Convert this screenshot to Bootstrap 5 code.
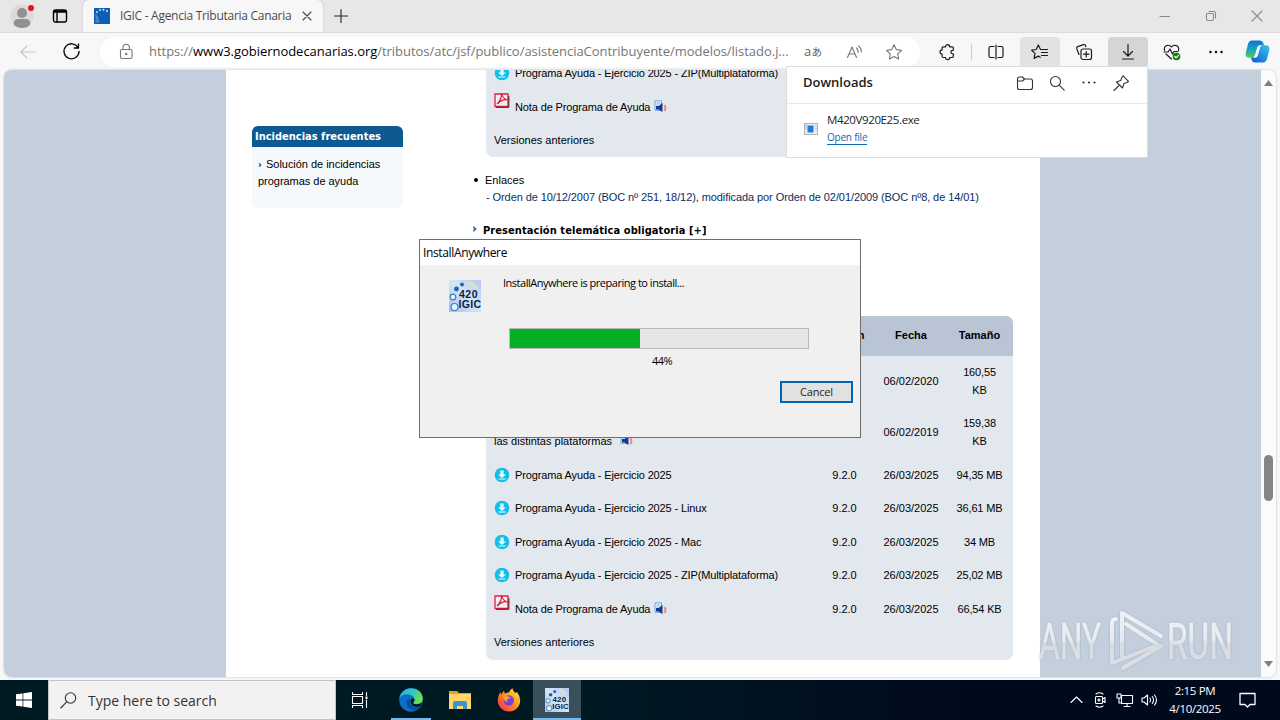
<!DOCTYPE html>
<html lang="es">
<head>
    <meta charset="UTF-8"/>
    <title>IGIC - Agencia Tributaria Canaria</title>
    <link href="https://cdn.jsdelivr.net/npm/bootstrap@5.3.3/dist/css/bootstrap.min.css" rel="stylesheet"/>
    <style>
        body{width:1280px;height:720px;background:#f7f7f7;color:#000;font-family:"Open Sans","Noto Sans",sans-serif;font-size:12px;line-height:1.5}
        svg{display:block;flex:none;overflow:visible}
        .ln{fill:none;stroke:currentColor;stroke-width:1.1;stroke-linecap:round;stroke-linejoin:round}

        /* ventana del navegador */
        .titlebar{height:32px;background:#e7e7e7}
        .tb-left{width:83px}
        .tb-cell{width:46px}
        .win-ctl{color:#8a8a8a}
        .tab-active{width:240px;height:32px;background:#f7f7f7;border-radius:6px 6px 0 0;box-shadow:0 0 2px #bbb;padding:0 11px;color:#4a4a4a}
        .tab-title{width:175px;font-size:12px;letter-spacing:-.28px;margin-left:10px}
        .new-tab{margin-left:11px;color:#222}
        .toolbar{height:38px;background:#f7f7f7;border-top:1px solid #dcdcdc}
        .ic-back{margin-left:20px;color:#c6c6c6}
        .ic-reload{margin:0 20px 0 27px;stroke-width:1.3}
        .address{width:820px;height:30px;border-radius:15px;background:#fff;color:#767676;padding-left:16px}
        .url-text{width:645px;font-size:13px;margin-left:13px;letter-spacing:-.035px}
        .url-text b{font-weight:400;color:#000}
        .tool{width:40px;height:30px;margin-right:4px;border-radius:4px;color:#1b1b1b}
        .tool .ln{stroke-width:1.2}
        .tool.first{margin:0 0 0 7px}
        .tool.on{background:#e2e2e2}
        .tool.down{background:#d5d5d5}
        .tool-sep{width:1px;height:16px;background:#ccc;margin:0 4px 0 4px}
        .copilot{margin-left:5px}

        /* página */
        .viewport{height:607px;margin:0 4px;border-radius:8px;box-shadow:0 0 2px #aaa;background:#fff}
        .side-left{width:222px;background:#c4cfdd}
        .side-right{width:221px;background:#c4cfdd}
        .page{width:814px;background:#fff;font-family:"Liberation Sans",Arial,sans-serif;font-size:11px;line-height:18px;padding-left:26px}
        .scroller{width:15px;background:#fbfbfb;padding:10px 0}
        .thumb{width:9px;height:46px;border-radius:5px;background:#858585;margin-top:369px}
        .aside-box{width:151px;margin-top:56px}
        .aside-head{height:21px;background:#0d5a93;color:#fff;font-family:"DejaVu Sans",Verdana,sans-serif;font-stretch:condensed;font-weight:700;font-size:11px;line-height:22px;padding-left:3px;border-radius:6px 6px 0 0}
        .aside-body{height:61px;background:#f6f9fc;border-radius:0 0 6px 6px;line-height:17px;padding:9px 6px;letter-spacing:-.03px}
        .main-col{width:541px;margin-left:69px}
        .panel{width:527px;margin-left:14px;background:#e3e8ef}
        .panel-top{height:87px;border-radius:0 0 7px 7px}
        .panel-table{height:344px;margin-top:76px;border-radius:7px}
        .line{height:33.5px;flex:none}
        .line.tall{height:51px;padding-bottom:2px}
        .line.head{height:40px;background:#b9c5d5;font-weight:700;font-size:11px;padding-bottom:2px}
        .c-name{width:326px;padding-left:8px;letter-spacing:-.13px}
        .c-name .plain{letter-spacing:0}
        .c-name .with-icon{padding-left:1px}
        .ic-pdf{margin-bottom:13px}
        .c-ver{width:65px}
        .c-date,.c-size{width:68px}
        .c-size{letter-spacing:-.15px;padding-left:1px}
        .head .c-size{letter-spacing:0}
        .links-head{margin-top:14px}
        .blue-link{color:#0b2e62;line-height:16px;padding-left:14px;letter-spacing:-.083px}
        .dot{width:4px;height:4px;border-radius:50%;background:#000;margin:0 7px 0 2px}
        .section-title{font-family:"DejaVu Sans",Verdana,sans-serif;font-stretch:condensed;font-weight:700;font-size:11px;letter-spacing:.07px;margin-top:17px}
        .section-title span{padding-left:2px}

        /* descargas */
        .downloads{position:absolute;left:786px;top:66px;width:362px;height:92px;background:#fff;border:1px solid #dcdcdc;z-index:5}
        .dl-head{height:37px;border-bottom:1px solid #e8e8e8;padding:0 18px 4px 16px;color:#333}
        .dl-icons{gap:16px}
        .dl-title{font-size:13px;font-weight:600;color:#1b1b1b}
        .dl-row{padding:8px 17px}
        .dl-info{margin-left:9px}
        .dl-name{font-size:11.5px;line-height:15px;letter-spacing:-.38px;color:#222}
        .dl-open{font-size:10px;line-height:14px;color:#1568b0;border-bottom:1px solid #1568b0;letter-spacing:-.22px;margin-top:3px;margin-bottom:1px}

        /* diálogo del instalador */
        .installer{position:absolute;left:419px;top:239px;width:442px;height:199px;background:#f0f0f0;border:1px solid #6e6e6e;z-index:6}
        .ins-title{height:25px;background:#fff;padding-left:3px;line-height:25px;font-size:12px;letter-spacing:-.36px}
        .ins-body{height:172px;padding:11px 7px 0 29px;font-size:11px;letter-spacing:-.48px}
        .ins-logo{margin-top:4px}
        .ins-col{width:306px;margin-left:22px}
        .ins-msg{line-height:14px}
        .progress.meter{width:300px;height:21px;margin:38px 0 0 6px;border:1px solid #b8b8b8;border-radius:0;background:#e5e5e5}
        .meter .progress-bar{background:#06b025}
        .ins-pct{margin-top:4px;padding-left:12px}
        .ins-foot{margin-top:11px}
        .btn-cancel{width:73px;height:22px;border:2px solid #0067b8;background:#e1e1e1;font-size:11px;line-height:17px;padding:0;border-radius:0;letter-spacing:-.2px}

        /* barra de tareas */
        .taskbar{height:40px;margin-top:3px;background:linear-gradient(90deg,#001a23,#001a24 45%,#000a1d 75%);color:#fff}
        .task{width:49px;height:40px}
        .start{width:48px}
        .searchbox{width:288px;height:40px;background:#f2f2f2;border:1px solid #c4c4c4;color:#333;font-size:14px;padding-left:11px}
        .searchbox span{margin-left:11px}
        .task-view{margin-right:1px;padding-right:2px}
        .task.open{background:linear-gradient(#74b9f0,#74b9f0) center bottom/40px 2px no-repeat}
        .task.current{width:48px;background:linear-gradient(#74b9f0,#74b9f0) center bottom/48px 2px no-repeat #39505a}
        .tray{gap:8px}
        .clock{font-size:11.5px;line-height:18px;width:58px;letter-spacing:-.35px;white-space:nowrap}
        .ic-note{margin:0 24px 0 7px;stroke-width:1.3}
        .watermark{position:absolute;left:1036px;top:606px;z-index:4}
    </style>
</head>
<body class="d-flex flex-column overflow-hidden m-0">

<!-- iconos repetidos -->
<svg width="0" height="0" class="position-absolute">
    <defs>
        <linearGradient id="gIgic" x1="0" y1="1" x2="1" y2="0"><stop offset="0" stop-color="#a9bdf0"/><stop offset=".5" stop-color="#d3e6f5"/><stop offset="1" stop-color="#b9c6f7"/></linearGradient>
        <symbol id="igic" viewBox="0 0 32 32">
            <rect width="32" height="32" fill="url(#gIgic)"/>
            <path d="M17 2l5-1 6 5v5z" fill="#d9ecb0" opacity=".7"/>
            <circle cx="13" cy="4.500" r="2" fill="#2565ae"/><circle cx="7.500" cy="9" r="2.400" fill="#1763b8"/>
            <circle cx="4" cy="17" r="2.800" fill="#e8f4ff" stroke="#3482c4" stroke-width="1.200"/>
            <circle cx="5.500" cy="27" r="3.500" fill="#e8f4ff" stroke="#3482c4" stroke-width="1.200"/>
            <text x="10" y="18" font-family="Liberation Sans" font-weight="700" font-size="10.500" textLength="18" fill="#0a1c44">420</text>
            <text x="9.500" y="28" font-family="Liberation Sans" font-weight="700" font-size="10.500" textLength="22" fill="#0a1c44">IGIC</text>
        </symbol>
        <symbol id="dl" viewBox="0 0 16 16">
            <circle cx="8" cy="8" r="7.300" fill="#12bfe8"/>
            <path d="M6.300 3.500h3.400v4H12L8 11 4 7.500h2.300z" fill="#e2f8ff"/><path d="M4.500 12h7" stroke="#e2f8ff" stroke-width="1.200"/>
        </symbol>
        <symbol id="pdf" viewBox="0 0 16 16">
            <path d="M1 2h13v12.500H1z" fill="#f0eef0" stroke="#e0203c" stroke-width="1.300"/>
            <path d="M14.800 4v11.300H2" fill="none" stroke="#6a1020" stroke-width="1"/>
            <path d="M3 12C6 9 8 5 7.500 1c1 5 3 7 8 7.200-4.500-1.200-8.500-.2-11.500 3.300" fill="none" stroke="#e0203c" stroke-width="1.200"/>
        </symbol>
        <symbol id="audio" viewBox="0 0 13 13">
            <path d="M1 .8h6.500v9.500H1z" fill="#eaf5ff" stroke="#5aa0dc" stroke-width=".9"/><path d="M2.500 3h4M2.500 5h2" stroke="#5aa0dc" stroke-width=".8"/>
            <path d="M2 6h2.500L8.500 3v9L4.500 9.500H2z" fill="#12399a"/><path d="M10.500 5q1.800 3 0 6" fill="none" stroke="#e88a80" stroke-width="2"/>
        </symbol>
        <symbol id="arrow" viewBox="0 0 5 6"><path d="M.8.500h1.500L4.800 3 2.300 5.500H.8l1-2.500z" fill="#3c73a5"/></symbol>
    </defs>
</svg>

<!-- barra de título -->
<div class="titlebar d-flex align-items-center flex-shrink-0">
    <div class="tb-left d-flex align-items-center ps-2">
        <svg width="28" height="28" viewBox="0 0 28 28"><circle cx="14" cy="14" r="11.500" fill="#dcdad8"/><circle cx="14" cy="11" r="5" fill="#92908e"/><path d="M6 23c-1-3 1-6 4-6h8c3 0 5 3 4 6-4 4-12 4-16 0z" fill="#92908e"/><circle cx="23" cy="6" r="3" fill="#e81123"/></svg>
        <svg class="ms-3 ln" width="16" height="16" viewBox="0 0 16 16"><g stroke-width="1.400"><rect x="1.500" y="2" width="13" height="12" rx="2"/><path d="M2.500 3.500h11" stroke-width="2.500"/><path d="M5 5v9"/></g></svg>
    </div>
    <div class="tab-active d-flex align-items-center">
        <svg width="16" height="16" viewBox="0 0 16 16"><rect width="16" height="16" fill="#0c5fb5"/><g fill="#d8ecff"><circle cx="3" cy="4" r=".9"/><circle cx="6" cy="2" r=".9"/><circle cx="9.500" cy="1.700" r="1"/><circle cx="13" cy="3" r="1"/><circle cx="2" cy="7" r=".6"/></g><g fill="none" stroke="#7db4e6" stroke-width=".8"><circle cx="2.800" cy="9.500" r="1"/><circle cx="3.300" cy="13" r="1.400"/></g></svg>
        <span class="tab-title text-nowrap">IGIC - Agencia Tributaria Canaria</span>
        <svg class="ln ms-2" width="10" height="10" viewBox="0 0 10 10"><path d="M1 1l8 8M9 1L1 9"/></svg>
    </div>
    <svg class="ln new-tab" width="14" height="14" viewBox="0 0 14 14"><path d="M7 .5v13M.5 7h13"/></svg>
    <div class="win-ctl d-flex ms-auto">
        <div class="tb-cell d-flex justify-content-center"><svg class="ln" width="10" height="10" viewBox="0 0 10 10"><path d="M0 5.500h9.500"/></svg></div>
        <div class="tb-cell d-flex justify-content-center"><svg class="ln" width="10" height="10" viewBox="0 0 10 10"><rect x=".5" y="2.500" width="7" height="7" rx="1.500"/><path d="M3 .5h4.500q2 0 2 2V7"/></svg></div>
        <div class="tb-cell d-flex justify-content-center"><svg class="ln" width="10" height="10" viewBox="0 0 10 10"><path d="M0 0l10 10M10 0L0 10"/></svg></div>
    </div>
</div>

<!-- barra de herramientas -->
<div class="toolbar d-flex align-items-center flex-shrink-0">
    <svg class="ln ic-back" width="16" height="14" viewBox="0 0 16 14"><path d="M15.500 7H.8M7 1L.8 7 7 13"/></svg>
    <svg class="ln ic-reload" width="17" height="17" viewBox="0 0 17 17"><path d="M15 4.500A7.500 7.500 0 1 0 16 8.500M15.500.8v4.200h-4.200"/></svg>
    <div class="address d-flex align-items-center">
        <svg class="ln" width="20" height="18" viewBox="0 0 20 18"><rect x="4.500" y="6.500" width="11.500" height="9" rx="1.500"/><path d="M7 6.500V4.500a3.200 3.200 0 0 1 6.400 0v2"/><circle cx="10.200" cy="11" r=".7" fill="currentColor"/></svg>
        <span class="url-text text-nowrap">https://<b>www3.gobiernodecanarias.org</b>/tributos/atc/jsf/publico/asistenciaContribuyente/modelos/listado.j...</span>
        <svg width="40" height="18" viewBox="0 0 40 18"><text x="10" y="13" font-size="13" fill="#666" font-family="Open Sans">a</text><text x="17.500" y="13" font-size="10.500" fill="#666" font-family="Noto Sans CJK JP">あ</text></svg>
        <svg width="40" height="18" viewBox="0 0 40 18" class="ln"><path d="M13.500 14.500L18 4l4.500 10.500M15 11h6M22.500 5q2 2 1.500 4.500M24.500 2.800q3.200 2.700 2.800 6.200"/></svg>
        <svg width="40" height="18" viewBox="0 0 40 18" class="ln"><path d="M20 1.800l2.300 4.800 5.200.7-3.800 3.600.9 5.200L20 13.600l-4.600 2.500.9-5.200-3.800-3.600 5.200-.7z"/></svg>
    </div>
    <div class="tool first d-flex align-items-center justify-content-center"><svg class="ln" width="16" height="16" viewBox="0 0 16 16"><path d="M4.300 2.800h2.200a2.100 2.100 0 0 1 4.200 0h2.400a1.200 1.200 0 0 1 1.200 1.200v2.300h-.6a1.800 1.800 0 0 0 0 3.600h.6v2.400a1.200 1.200 0 0 1-1.200 1.200h-2.400a2.100 2.100 0 0 1-4.200 0H4.300a1.200 1.200 0 0 1-1.200-1.200v-2.200a2.100 2.100 0 0 1 0-4.200V4a1.200 1.200 0 0 1 1.200-1.200z"/></svg></div>
    <div class="tool-sep"></div>
    <div class="tool d-flex align-items-center justify-content-center"><svg class="ln" width="16" height="16" viewBox="0 0 16 16"><path d="M6 2.500H2.500q-1.500 0-1.500 1.500v8q0 1.500 1.500 1.500H6M10 2.500h3.500q1.500 0 1.500 1.500v8q0 1.500-1.500 1.500H10M8 1v14"/></svg></div>
    <div class="tool on d-flex align-items-center justify-content-center"><svg class="ln" width="18" height="16" viewBox="0 0 18 16"><path d="M11 5.500H9.500L7.300 1 5.200 5.500l-4.500.7 3.300 3.200-.9 5 4.200-2.300 2 1.100M11 5.500h5.500M10.500 8.500h6M10.500 11.500h6"/></svg></div>
    <div class="tool d-flex align-items-center justify-content-center"><svg class="ln" width="16" height="16" viewBox="0 0 16 16"><rect x="5" y="5" width="10.500" height="10.500" rx="2"/><path d="M10.200 7.500v5.500M7.500 10.200h5.500M3 10.500L.7 4.500q-.3-1.300 1-1.900L7.500.6q1.500-.4 2 .9l.4 1.200"/></svg></div>
    <div class="tool down d-flex align-items-center justify-content-center"><svg class="ln" width="14" height="16" viewBox="0 0 14 16"><path d="M7 .5v11M2.500 7.500L7 12l4.500-4.500M1.500 15h11"/></svg></div>
    <div class="tool d-flex align-items-center justify-content-center"><svg class="ln" width="18" height="16" viewBox="0 0 18 16"><path d="M1.500 6.500Q.5 2 4.500 1.300 7 1 8.500 3 10 1 12.500 1.300q4 .7 3 5.200M1 8h4l2-3 2.500 5L11 7.500h4M3 10l5.500 5"/><circle cx="13.500" cy="12.500" r="3.800" fill="#107c10" stroke="none"/><path d="M11.800 12.500l1.300 1.300 2.300-2.500" stroke="#fff"/></svg></div>
    <div class="tool d-flex align-items-center justify-content-center"><svg width="14" height="4" viewBox="0 0 14 4" fill="currentColor"><circle cx="1.500" cy="2" r="1.300"/><circle cx="7" cy="2" r="1.300"/><circle cx="12.500" cy="2" r="1.300"/></svg></div>
    <svg class="copilot" width="25" height="23" viewBox="0 0 25 23">
        <defs><linearGradient id="cpA" x1="0" y1="0" x2="0" y2="1"><stop offset="0" stop-color="#1b6fd0"/><stop offset=".5" stop-color="#12a6c8"/><stop offset="1" stop-color="#5ac95a"/></linearGradient><linearGradient id="cpB" x1="1" y1="0" x2="0" y2="1"><stop offset="0" stop-color="#37c4f0"/><stop offset="1" stop-color="#1157d0"/></linearGradient></defs>
        <path d="M7 .5h8q2.500 0 3.300 2.500L19 5.500h-4q-2 0-2.700 2.200L10.200 15q-.8 2.700-3.500 2.700H4Q0 17.500.7 13L3 4Q4 .8 7 .5z" fill="url(#cpA)"/>
        <path d="M18 22.500h-8q-2.500 0-3.300-2.500L6 17.500h4q2 0 2.700-2.200L14.800 8q.8-2.700 3.500-2.700H21q4 .2 3.300 4.700L22 19q-1 3.200-4 3.500z" fill="url(#cpB)"/>
        <path d="M12.300 7.500q.6-1.800 2.200-2h1.700q-1 .7-1.500 2.700l-2 7q-.5 1.800-1.800 2.300H8.800q1-.7 1.500-2.800z" fill="#f4faff"/>
    </svg>
</div>

<!-- contenido -->
<div class="viewport d-flex overflow-hidden flex-shrink-0">
    <div class="side-left"></div>
    <div class="page d-flex overflow-hidden">
        <div class="aside-box">
            <div class="aside-head">Incidencias frecuentes</div>
            <div class="aside-body"><svg class="d-inline-block me-1" width="4" height="6"><use href="#arrow"/></svg>Solución de incidencias programas de ayuda</div>
        </div>
        <div class="main-col">
            <div class="panel panel-top d-flex flex-column justify-content-end overflow-hidden">
                <div class="line d-flex align-items-center"><div class="c-name d-flex align-items-center"><svg width="16" height="16" class="me-1"><use href="#dl"/></svg><span class="with-icon">Programa Ayuda - Ejercicio 2025 - ZIP(Multiplataforma)</span></div></div>
                <div class="line d-flex align-items-center"><div class="c-name d-flex align-items-center"><svg width="16" height="16" class="me-1 ic-pdf"><use href="#pdf"/></svg><span class="with-icon">Nota de Programa de Ayuda</span><svg width="13" height="13" class="ms-1"><use href="#audio"/></svg></div></div>
                <div class="line d-flex align-items-center"><div class="c-name"><span class="plain">Versiones anteriores</span></div></div>
            </div>
            <div class="links-head d-flex align-items-center"><span class="dot"></span>Enlaces</div>
            <div class="blue-link text-nowrap">- Orden de 10/12/2007 (BOC nº 251, 18/12), modificada por Orden de 02/01/2009 (BOC nº8, de 14/01)</div>
            <div class="section-title d-flex align-items-center"><svg class="me-1 mb-1" width="5" height="6"><use href="#arrow"/></svg><span>Presentación telemática obligatoria [+]</span></div>
            <div class="panel panel-table overflow-hidden text-center" id="tabla"></div>
        </div>
    </div>
    <div class="side-right"></div>
    <div class="scroller d-flex flex-column align-items-center">
        <svg width="9" height="6" viewBox="0 0 9 6"><path d="M4.500 0L9 6H0z" fill="#7f7f7f"/></svg>
        <div class="thumb"></div>
        <svg class="mt-auto" width="9" height="6" viewBox="0 0 9 6"><path d="M4.500 6L9 0H0z" fill="#7f7f7f"/></svg>
    </div>
</div>

<!-- barra de tareas -->
<div class="taskbar d-flex align-items-center flex-shrink-0">
    <div class="task start d-flex align-items-center justify-content-center"><svg width="16" height="16" viewBox="0 0 16 16" fill="#fff"><path d="M0 2.300l6.600-.9v6.200H0zM7.300 1.300L16 0v7.600H7.300zM0 8.400h6.600v6.200L0 13.700zM7.300 8.400H16V16l-8.700-1.300z"/></svg></div>
    <div class="searchbox d-flex align-items-center"><svg class="ln" width="17" height="17" viewBox="0 0 17 17"><circle cx="10.500" cy="6" r="5.200"/><path d="M6.700 9.800L.8 16"/></svg><span>Type here to search</span></div>
    <div class="task task-view d-flex align-items-center justify-content-center"><svg class="ln" width="16" height="16" viewBox="0 0 16 16"><path d="M.5.500v2h10v-2M.5 15.500v-2h10v2M.5 4.500h10v7H.5zM14.500 .5v3M14.500 8v7.500"/><path d="M13.500 4.500h2v2.500h-2z" fill="#fff" stroke="none"/></svg></div>
    <div class="task open d-flex align-items-center justify-content-center">
        <svg width="24" height="24" viewBox="0 0 24 24"><defs><linearGradient id="edA" x1="0" y1="0" x2="1" y2=".4"><stop offset="0" stop-color="#2bb0ee"/><stop offset=".6" stop-color="#35c7c0"/><stop offset="1" stop-color="#6be04c"/></linearGradient></defs>
            <circle cx="12" cy="12" r="11.800" fill="#0f6fc8"/>
            <path d="M.3 10.500C1.500 4 6.500.2 12 .2c7 0 11.800 4.800 11.800 10.300 0 3.500-2.600 5.700-6 5.700-2.800 0-4-1-3.600-1.800 1-1 1.300-1.700 1.300-2.700C15.500 8.500 12 6.200 8 6.200c-4 0-6.700 2-7.700 4.300z" fill="url(#edA)"/>
            <path d="M8.500 11.500C6.500 15 8 20 13 22c4 .8 7.500-1 9.300-4.200-3.300 1.700-7.500 1.500-10-.8-1.800-1.700-2-4-.8-6z" fill="#0b4d98"/>
            <path d="M15.500 11.700c0 1-.3 1.700-1.300 2.700-.4.800.8 1.800 3.600 1.800 2 0 3.500-.7 4.700-1.700l-.5 3.500c-4 1.500-8.500.5-10-2.500-1-2-.2-4.500 1-5.300 1.500-.2 2.500.5 2.500 1.500z" fill="#001a23"/></svg>
    </div>
    <div class="task d-flex align-items-center justify-content-center"><svg width="22" height="20" viewBox="0 0 22 20"><path d="M0 1h8l2 2h12v4H0z" fill="#e8a028"/><path d="M0 4h22v15H0z" fill="#ffd766"/><path d="M4 19v-6q0-2 2-2h10q2 0 2 2v6h-4v-3H8v3z" fill="#3a94d6"/></svg></div>
    <div class="task d-flex align-items-center justify-content-center"><svg width="24" height="24" viewBox="0 0 24 24"><defs><linearGradient id="ffA" x1="1" y1="0" x2="0" y2="1"><stop offset="0" stop-color="#fff04a"/><stop offset=".5" stop-color="#ff8a1e"/><stop offset="1" stop-color="#f2205c"/></linearGradient></defs>
        <path d="M12 23.500C5.500 23.500.8 18.500.8 12.500.8 9 2 6 3.500 4l.6 2.500L7 2.500l.8 3q2-1 4-1Q12.500 2 15.500.3q.3 3 3 4.700L20 4q3.200 4 3.200 8.500c0 6-4.700 11-11.200 11z" fill="url(#ffA)"/><circle cx="11.800" cy="12.500" r="5.200" fill="#7b3fd8"/><path d="M5.500 8q3-1.500 6 .8l2 .2q-.5 2-3 2-1.500 2 .5 3-3.500.5-5.500-6z" fill="#ff9f22"/></svg></div>
    <div class="task current d-flex align-items-center justify-content-center"><svg width="24" height="24"><use href="#igic"/></svg></div>
    <div class="tray d-flex align-items-center ms-auto">
        <svg class="ln" width="16" height="16" viewBox="0 0 16 16"><path d="M3 10.500l5.500-5.500 5.500 5.500"/></svg>
        <svg class="ln" width="16" height="16" viewBox="0 0 16 16"><rect x="3.500" y="4.500" width="7" height="7" rx="1"/><path d="M10.500 7l2.500-1.500v5L10.500 9M4 2q3.500-2.500 7 0M4 14q3.500 2.500 7 0"/><circle cx="7" cy="8" r="1"/></svg>
        <svg class="ln" width="17" height="16" viewBox="0 0 17 16"><path d="M5.500 3.500h11v8h-11zM11 11.500v3M8 14.500h6M1 2h4v4H1zM3 6v5h2.500"/></svg>
        <svg class="ln" width="17" height="16" viewBox="0 0 17 16"><path d="M1 6h2l3.500-3v10L3 10H1zM9 6q1.300 2 0 4M11.300 4.500q2.500 3.500 0 7M13.500 3q4 5 0 10"/></svg>
        <div class="clock text-center">2:15 PM<br>4/10/2025</div>
        <svg class="ln ic-note" width="17" height="17" viewBox="0 0 17 17"><path d="M1 1.500h15v11h-5L8.500 15 6 12.500H1z"/></svg>
    </div>
</div>

<!-- panel de descargas -->
<div class="downloads">
    <div class="dl-head d-flex align-items-center">
        <span class="dl-title me-auto">Downloads</span>
        <div class="dl-icons d-flex align-items-center">
            <svg class="ln" width="16" height="16" viewBox="0 0 16 16"><path d="M.5 4q0-2 2-2h3l2 2h6q2 0 2 2v6.500q0 2-2 2h-11q-2 0-2-2zM.5 6h5l2-2"/></svg>
            <svg class="ln" width="16" height="16" viewBox="0 0 16 16"><circle cx="6.500" cy="6.500" r="5"/><path d="M10.200 10.200l5 5"/></svg>
            <svg width="16" height="4" viewBox="0 0 16 4" fill="currentColor"><circle cx="2.500" cy="1.500" r="1.100"/><circle cx="8" cy="1.500" r="1.100"/><circle cx="13.500" cy="1.500" r="1.100"/></svg>
            <svg class="ln" width="16" height="16" viewBox="0 0 16 16"><path d="M10 .8l5.500 5.500-1.500 1.200-3 1L9.500 13 3.500 7l4.300-1.500 1-3zM6.500 10L1 15.500"/></svg>
        </div>
    </div>
    <div class="dl-row d-flex align-items-center">
        <svg width="14" height="12" viewBox="0 0 14 12"><rect x=".5" y=".5" width="13" height="11" fill="#e8eef2" stroke="#b4b4b4"/><rect x="3.500" y="2.500" width="6" height="7" fill="#1780d8"/><path d="M1 2h2M1 4h2M1 6h2M11 3h2M11 6h2" stroke="#bbb"/></svg>
        <div class="dl-info d-flex flex-column align-items-start"><span class="dl-name">M420V920E25.exe</span><span class="dl-open">Open file</span></div>
    </div>
</div>

<!-- instalador -->
<div class="installer">
    <div class="ins-title">InstallAnywhere</div>
    <div class="ins-body">
        <div class="d-flex">
            <svg class="ins-logo" width="32" height="32"><use href="#igic"/></svg>
            <div class="ins-col">
                <div class="ins-msg">InstallAnywhere is preparing to install...</div>
                <div class="progress meter"><div class="progress-bar" style="width:43.6%"></div></div>
                <div class="ins-pct text-center">44%</div>
            </div>
        </div>
        <div class="ins-foot d-flex justify-content-end"><button class="btn btn-cancel">Cancel</button></div>
    </div>
</div>

<!-- marca de agua -->
<svg class="watermark" width="200" height="70" viewBox="0 0 200 70" opacity=".7">
    <defs>
        <linearGradient id="wm" gradientUnits="userSpaceOnUse" x1="0" y1="12" x2="0" y2="60"><stop offset="0" stop-color="#fff"/><stop offset=".45" stop-color="#f6f8fa"/><stop offset=".55" stop-color="#dfe2e6"/><stop offset="1" stop-color="#e6e9ec"/></linearGradient>
        <filter id="wmShadow" x="-10%" y="-10%" width="120%" height="120%"><feDropShadow dx="0" dy="0" stdDeviation="1" flood-color="#808a96" flood-opacity=".7"/></filter>
    </defs>
    <g font-family="Roboto" font-size="50" fill="url(#wm)" stroke="url(#wm)" stroke-width=".6" filter="url(#wmShadow)">
        <text x="3" y="52.500" textLength="62" lengthAdjust="spacingAndGlyphs">ANY</text>
        <text x="131" y="52.500" textLength="66" lengthAdjust="spacingAndGlyphs">RUN</text>
    </g>
    <g fill="none" stroke="url(#wm)" stroke-width="4" stroke-linejoin="round" stroke-linecap="round" filter="url(#wmShadow)">
        <path d="M80 13q-4 0-4 4V57L122 39 90 18"/>
        <path d="M86 50V7L125 30"/>
        <path d="M87 62L125 40"/>
    </g>
</svg>

<script src="https://cdn.jsdelivr.net/npm/bootstrap@5.3.3/dist/js/bootstrap.bundle.min.js"></script>
<script>
/* filas de la tabla de programas */
const filas = [
  { alta: true, nombre: '', version: '', fecha: '06/02/2020', size: '160,55<br>KB' },
  { alta: true, nombre: '&nbsp;<br>las distintas plataformas', audio: true, version: '', fecha: '06/02/2019', size: '159,38<br>KB' },
  { icono: 'dl', nombre: 'Programa Ayuda - Ejercicio 2025', version: '9.2.0', fecha: '26/03/2025', size: '94,35 MB' },
  { icono: 'dl', nombre: 'Programa Ayuda - Ejercicio 2025 - Linux', version: '9.2.0', fecha: '26/03/2025', size: '36,61 MB' },
  { icono: 'dl', nombre: 'Programa Ayuda - Ejercicio 2025 - Mac', version: '9.2.0', fecha: '26/03/2025', size: '34 MB' },
  { icono: 'dl', nombre: 'Programa Ayuda - Ejercicio 2025 - ZIP(Multiplataforma)', version: '9.2.0', fecha: '26/03/2025', size: '25,02 MB' },
  { icono: 'pdf', nombre: 'Nota de Programa de Ayuda', audio: true, version: '9.2.0', fecha: '26/03/2025', size: '66,54 KB' },
  { nombre: 'Versiones anteriores', version: '', fecha: '', size: '' }
];

function render(lista){
  let html = `<div class="line head d-flex align-items-center"><div class="c-name"></div>
    <div class="c-ver">Versión</div><div class="c-date">Fecha</div><div class="c-size">Tamaño</div></div>`;
  lista.forEach(f => {
    const icono = f.icono ? `<svg width="16" height="16" class="me-1 ic-${f.icono}"><use href="#${f.icono}"/></svg>` : '';
    const audio = f.audio ? `<svg width="13" height="13" class="${f.alta ? 'ms-2 align-self-end mb-1' : 'ms-1'}"><use href="#audio"/></svg>` : '';
    html += `
      <div class="line ${f.alta ? 'tall' : ''} d-flex align-items-center">
        <div class="c-name d-flex align-items-center text-start">${icono}<span class="${f.icono ? 'with-icon' : 'plain'}">${f.nombre}</span>${audio}</div>
        <div class="c-ver">${f.version}</div>
        <div class="c-date">${f.fecha}</div>
        <div class="c-size">${f.size}</div>
      </div>`;
  });
  document.getElementById('tabla').innerHTML = html;
}

render(filas);
</script>
</body>
</html>
